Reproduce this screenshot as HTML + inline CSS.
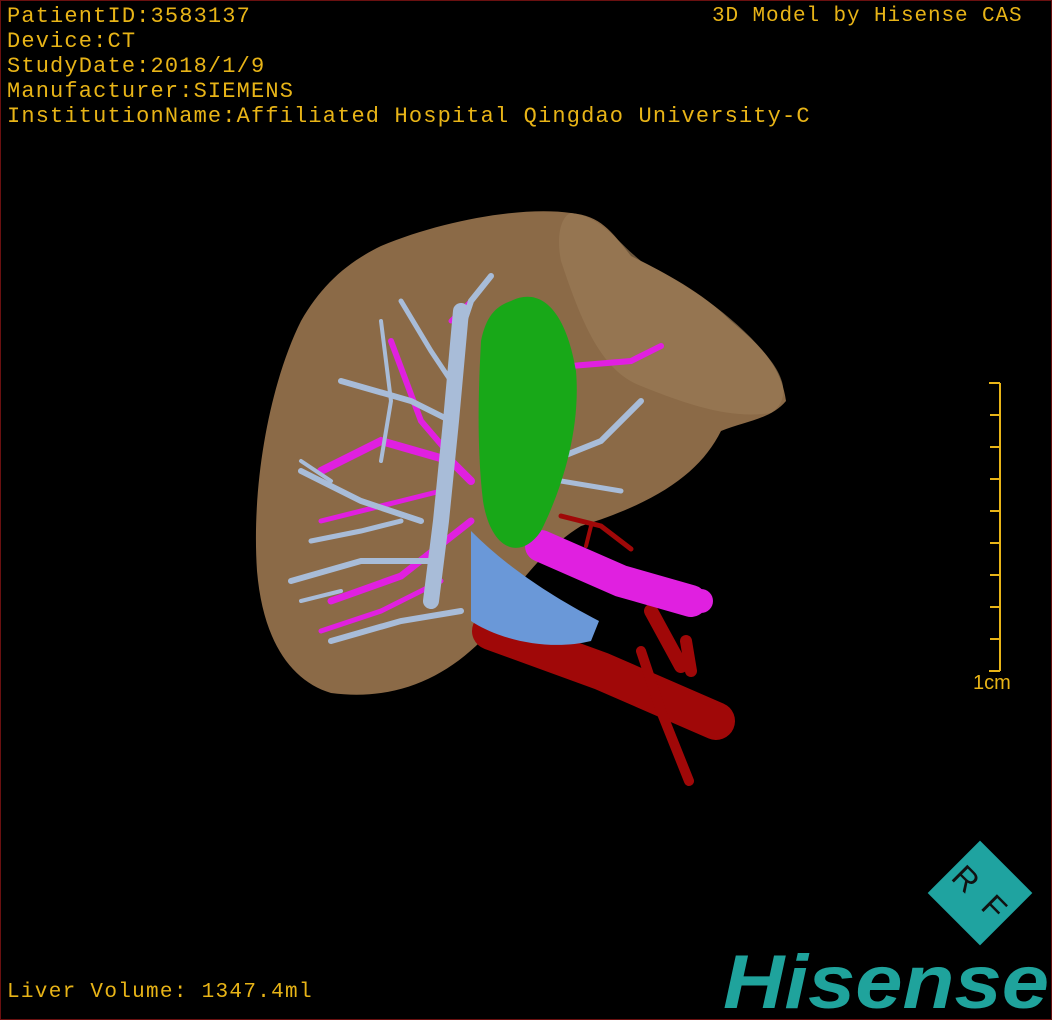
<!DOCTYPE html>
<html><head><meta charset="utf-8"><style>
html,body{margin:0;padding:0;background:#000;}
#w{position:relative;width:1052px;height:1020px;background:#000;overflow:hidden;box-sizing:border-box;border:1px solid #6a1010;}
.t{position:absolute;color:#e8b417;font-family:"Liberation Mono","DejaVu Sans Mono",monospace;font-size:22px;line-height:25px;white-space:pre;letter-spacing:1.15px}
</style></head><body><div id="w">
<div class="t" style="left:6px;top:3px">PatientID:3583137
Device:CT
StudyDate:2018/1/9
Manufacturer:SIEMENS
InstitutionName:Affiliated Hospital Qingdao University-C</div>
<div class="t" style="left:711px;top:3px;font-size:21px;letter-spacing:0.9px">3D Model by Hisense CAS</div>
<div class="t" style="left:6px;top:979px;font-size:21px;letter-spacing:1.3px">Liver Volume: 1347.4ml</div>
<div class="t" style="left:972px;top:670px;font-family:'Liberation Sans',sans-serif;font-size:20px;letter-spacing:0">1cm</div>
<svg width="1052" height="1020" style="position:absolute;left:0;top:0">
<g stroke="#e8b417" stroke-width="2" fill="none">
<path d="M999 382V670"/>
<path d="M988 382H999M989 414H999M989 446H999M989 478H999M989 510H999M989 542H999M989 574H999M989 606H999M989 638H999M988 670H999"/>
</g>
<path d="M380 245 C440 220 520 205 570 212 C600 215 610 230 630 255 C660 270 700 290 730 320 C760 345 780 365 785 400 C770 418 745 420 720 430 C700 470 660 500 580 525 C540 550 510 590 480 640 C440 680 390 700 330 692 C290 680 262 640 256 570 C250 480 270 380 300 320 C320 285 345 262 380 245Z" fill="#8b6a47"/>
<path d="M570 212 C600 215 615 240 640 260 C690 285 740 320 770 360 C785 380 788 400 770 412 C730 418 690 405 640 385 C600 370 580 320 560 260 C555 235 560 215 570 212Z" fill="#9a7a55" opacity="0.7"/>
<g stroke="#a00808" fill="none" stroke-linecap="round">
<path d="M490 630 L600 670 L715 720" stroke-width="38"/>
<path d="M640 650 L660 710 L688 780" stroke-width="10"/>
<path d="M650 610 L680 665" stroke-width="14"/>
<path d="M685 640 L690 670" stroke-width="12"/>
<path d="M560 515 L600 525 L630 548" stroke-width="5"/>
<path d="M590 525 L585 545" stroke-width="4"/>
</g>
<g stroke="#e020e0" fill="none" stroke-linecap="round">
<path d="M540 545 L620 580 L690 600" stroke-width="32"/>
<circle cx="700" cy="600" r="12" fill="#e020e0" stroke="none"/>
<path d="M320 470 L380 440 L450 460 L470 480" stroke-width="8"/>
<path d="M330 600 L400 575 L470 520" stroke-width="7"/>
<path d="M390 340 L420 420 L450 455" stroke-width="6"/>
<path d="M570 365 L630 360 L660 345" stroke-width="6"/>
<path d="M320 520 L400 500 L440 490" stroke-width="5"/>
<path d="M320 630 L380 610 L440 580" stroke-width="5"/>
<path d="M450 320 L470 300" stroke-width="5"/>
</g>
<g stroke="#a8bcd8" fill="none" stroke-linecap="round">
<path d="M460 310 L450 420 L440 520 L430 600" stroke-width="16"/>
<path d="M300 470 L360 500 L420 520" stroke-width="6"/>
<path d="M290 580 L360 560 L430 560" stroke-width="6"/>
<path d="M330 640 L400 620 L460 610" stroke-width="6"/>
<path d="M340 380 L410 400 L450 420" stroke-width="6"/>
<path d="M400 300 L430 350 L450 380" stroke-width="5"/>
<path d="M490 275 L470 300 L460 330" stroke-width="6"/>
<path d="M550 460 L600 440 L640 400" stroke-width="6"/>
<path d="M560 480 L620 490" stroke-width="5"/>
<path d="M380 320 L390 400 L380 460" stroke-width="4"/>
<path d="M310 540 L360 530 L400 520" stroke-width="5"/>
<path d="M300 600 L340 590" stroke-width="4"/>
<path d="M330 480 L300 460" stroke-width="4"/>
</g>
<path d="M470 530 C500 560 540 590 598 620 L590 640 C550 650 500 640 470 620Z" fill="#6a98d8"/>
<path d="M510 300 C540 285 565 310 575 370 C580 430 560 490 540 530 C520 560 490 550 482 500 C475 440 478 380 480 340 C485 315 495 305 510 300Z" fill="#18a818"/>
<g transform="translate(979 892) rotate(45)">
<rect x="-37" y="-37" width="74" height="74" fill="#1fa3a0"/>
<text x="-20" y="11" text-anchor="middle" font-family="Liberation Sans,sans-serif" font-size="32" fill="#111">R</text>
<text x="20" y="11" text-anchor="middle" font-family="Liberation Sans,sans-serif" font-size="32" fill="#111">F</text>
</g>
<text x="722" y="1007" font-family="Liberation Sans,sans-serif" font-weight="bold" font-style="italic" font-size="76" fill="#1fa39c" textLength="326" lengthAdjust="spacingAndGlyphs">Hisense</text>
</svg>
</div></body></html>
